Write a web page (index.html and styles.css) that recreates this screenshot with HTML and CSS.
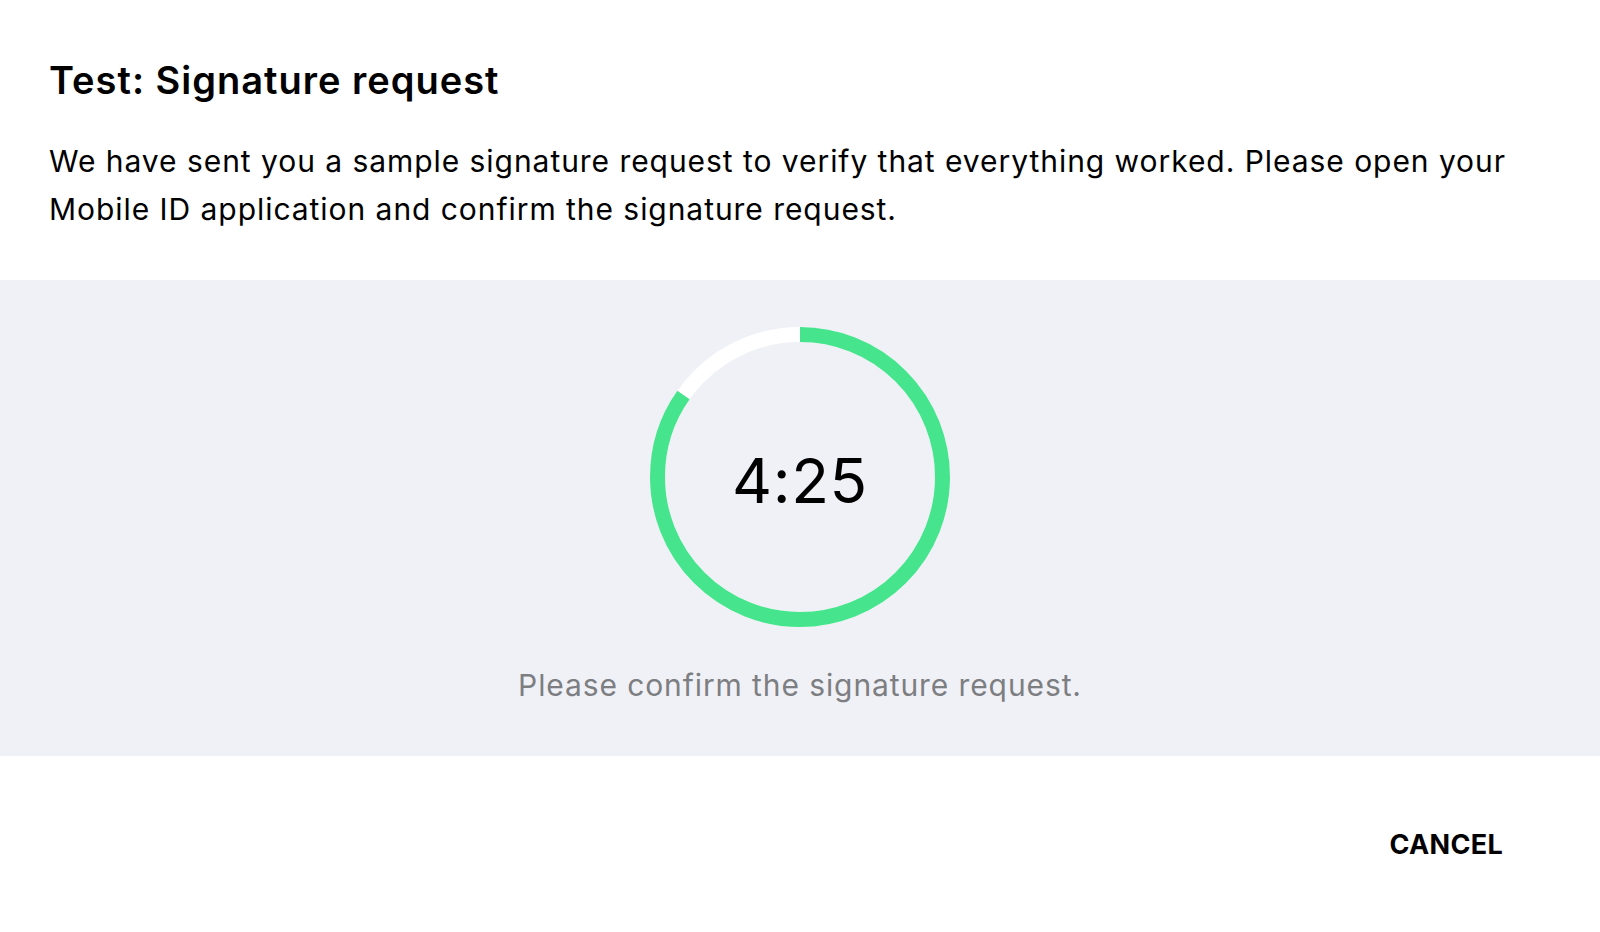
FILE: index.html
```html
<!DOCTYPE html>
<html lang="en">
<head>
<meta charset="utf-8">
<title>Test: Signature request</title>
<link rel="stylesheet" href="styles.css">
</head>
<body>
<div class="dialog">
  <div class="dialog-head">
    <h1 class="dialog-title">Test: Signature request</h1>
    <p class="dialog-text">We have sent you a sample signature request to verify that everything worked. Please open your Mobile ID application and confirm the signature request.</p>
  </div>
  <div class="dialog-body">
    <div class="timer">
      <svg class="timer-ring" width="300" height="300" viewBox="0 0 300 300">
        <circle cx="150" cy="150" r="142.5" fill="none" stroke="#ffffff" stroke-width="15"/>
        <circle cx="150" cy="150" r="142.5" fill="none" stroke="#46e58d" stroke-width="15"
          stroke-dasharray="758.6 895.4" transform="rotate(-90 150 150)"/>
      </svg>
      <div class="timer-value">4:25</div>
    </div>
    <p class="timer-hint">Please confirm the signature request.</p>
  </div>
  <div class="dialog-actions">
    <button class="btn-text" type="button">CANCEL</button>
  </div>
</div>
</body>
</html>
```
FILE: styles.css
```css
* { box-sizing: border-box; }
html, body { margin: 0; padding: 0; background: #ffffff; }
body {
  font-family: Inter, "Noto Sans", sans-serif;
  color: #000;
  width: 1600px;
  height: 932px;
}
.dialog {
  width: 1600px;
  height: 932px;
  border-radius: 16px;
  background: #fff;
  display: flex;
  flex-direction: column;
  overflow: hidden;
}
.dialog-head {
  padding: 56px 48px 0 49px;
  height: 280px;
}
.dialog-title {
  margin: 0;
  font-size: 38px;
  font-weight: 600;
  line-height: 48px;
  letter-spacing: 1px;
}
.dialog-text {
  margin: 33px 0 0 0;
  font-size: 30px;
  line-height: 48px;
  font-weight: 400;
  letter-spacing: 0.95px;
}
.dialog-body {
  background: #f0f1f6;
  height: 476px;
  display: flex;
  flex-direction: column;
  align-items: center;
  padding-top: 47px;
}
.timer {
  position: relative;
  width: 300px;
  height: 300px;
}
.timer-ring { display: block; }
.timer-value {
  position: absolute;
  inset: 0;
  display: flex;
  align-items: center;
  justify-content: center;
  font-size: 62px;
  font-weight: 400;
  letter-spacing: 0.6px;
  padding-top: 6px;
}
.timer-hint {
  margin: 38px 0 0 0;
  font-size: 30px;
  line-height: 40px;
  color: #7d7e82;
  letter-spacing: 0.9px;
}
.dialog-actions {
  flex: 1;
  display: flex;
  justify-content: flex-end;
  align-items: center;
  padding: 0 97px 0 0;
}
.btn-text {
  background: none;
  border: none;
  padding: 0;
  margin-top: 0;
  font-family: Inter, "Noto Sans", sans-serif;
  font-size: 27px;
  font-weight: 700;
  color: #000;
  letter-spacing: 0.3px;
  cursor: pointer;
}
```
